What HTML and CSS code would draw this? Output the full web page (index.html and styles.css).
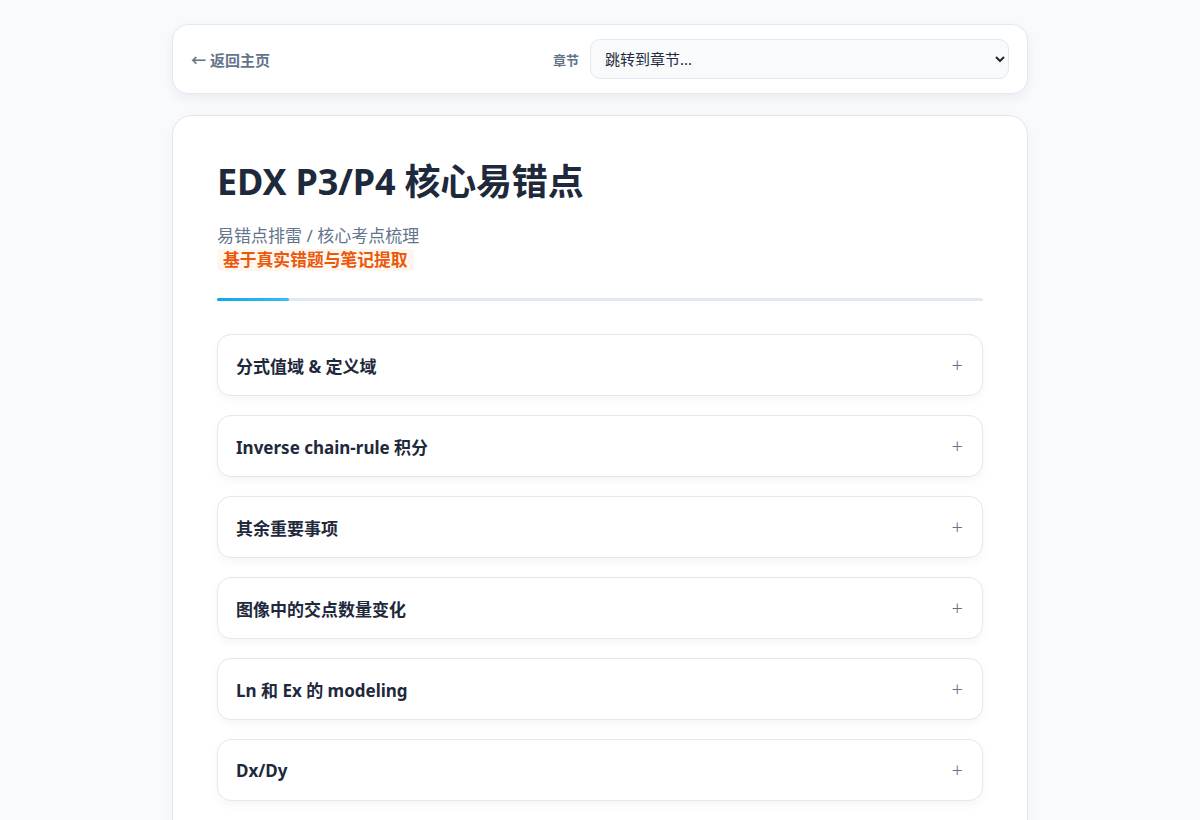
FILE: index.html
```html
<!DOCTYPE html>
<html lang="zh-CN">
<head>
<meta charset="utf-8">
<title>EDX P3/P4 核心易错点</title>
<link rel="stylesheet" href="styles.css">
</head>
<body>
<div class="wrap">
  <nav class="topbar">
    <a class="back" href="#">← 返回主页</a>
    <div class="jump">
      <label class="jump-label" for="ch">章节</label>
      <select id="ch" class="jump-select">
        <option>跳转到章节...</option>
      </select>
    </div>
  </nav>
  <main class="card">
    <h1 class="title">EDX P3/P4 核心易错点</h1>
    <p class="subtitle">易错点排雷 / 核心考点梳理</p>
    <span class="badge">基于真实错题与笔记提取</span>
    <div class="divider"><span class="divider-accent"></span></div>
    <div class="list">
      <div class="item"><span class="item-title">分式值域 &amp; 定义域</span><span class="plus">+</span></div>
      <div class="item"><span class="item-title">Inverse chain-rule 积分</span><span class="plus">+</span></div>
      <div class="item"><span class="item-title">其余重要事项</span><span class="plus">+</span></div>
      <div class="item"><span class="item-title">图像中的交点数量变化</span><span class="plus">+</span></div>
      <div class="item"><span class="item-title">Ln 和 Ex 的 modeling</span><span class="plus">+</span></div>
      <div class="item"><span class="item-title">Dx/Dy</span><span class="plus">+</span></div>
    </div>
  </main>
</div>
</body>
</html>
```

FILE: styles.css
```css
* { box-sizing: border-box; }
html, body { margin: 0; padding: 0; }
body {
  background: #f8fafc;
  font-family: "Noto Sans", "Noto Sans CJK SC", sans-serif;
  color: #1e293b;
}
.wrap {
  width: 856px;
  margin: 0 auto;
  padding-top: 24px;
}
.topbar {
  display: flex;
  align-items: center;
  justify-content: space-between;
  background: #fff;
  border: 1px solid #e2e8f0;
  border-radius: 16px;
  padding: 14px 18px;
  box-shadow: 0 4px 12px rgba(15, 23, 42, 0.06);
}
.back {
  font-size: 15px;
  font-weight: 600;
  color: #64748b;
  text-decoration: none;
}
.jump {
  display: flex;
  align-items: center;
  gap: 11px;
}
.jump-label {
  font-size: 13px;
  font-weight: 700;
  color: #64748b;
}
.jump-select {
  width: 419px;
  height: 40px;
  border: 1px solid #e2e8f0;
  border-radius: 10px;
  background: #f8fafc;
  font-family: "Noto Sans", "Noto Sans CJK SC", sans-serif;
  font-size: 15px;
  color: #1e293b;
  padding: 0 10px;
}
.card {
  margin-top: 21px;
  background: #fff;
  border: 1px solid #e2e8f0;
  border-radius: 20px;
  padding: 38px 44px 60px;
  box-shadow: 0 4px 14px rgba(15, 23, 42, 0.04);
}
.title {
  margin: 0;
  font-size: 36px;
  font-weight: 700;
  line-height: 56px;
  color: #1e293b;
  letter-spacing: -0.2px;
}
.subtitle {
  margin: 14px 0 0;
  font-size: 17px;
  line-height: 24px;
  color: #64748b;
}
.badge {
  display: inline-block;
  margin-top: 1px;
  padding: 0 6px;
  background: #fff7ed;
  border-radius: 4px;
  color: #ea580c;
  font-size: 16.8px;
  font-weight: 700;
  line-height: 22px;
}
.divider {
  margin-top: 27px;
  height: 3px;
  background: #e2e8f0;
  border-radius: 2px;
  display: flex;
}
.divider-accent {
  width: 72px;
  height: 3px;
  border-radius: 2px;
  background: linear-gradient(90deg, #0ea5e9, #38bdf8);
}
.list {
  margin-top: 33px;
  display: flex;
  flex-direction: column;
  gap: 19px;
}
.item {
  display: flex;
  align-items: center;
  justify-content: space-between;
  height: 62px;
  padding: 0 19px 0 18px;
  border: 1px solid #e2e8f0;
  border-radius: 14px;
  background: #fff;
  box-shadow: 0 4px 10px rgba(15, 23, 42, 0.04);
}
.item-title {
  font-size: 17px;
  font-weight: 700;
  color: #1e293b;
}
.plus {
  font-size: 20px;
  font-weight: 300;
  color: #64748b;
  line-height: 1;
}
```
